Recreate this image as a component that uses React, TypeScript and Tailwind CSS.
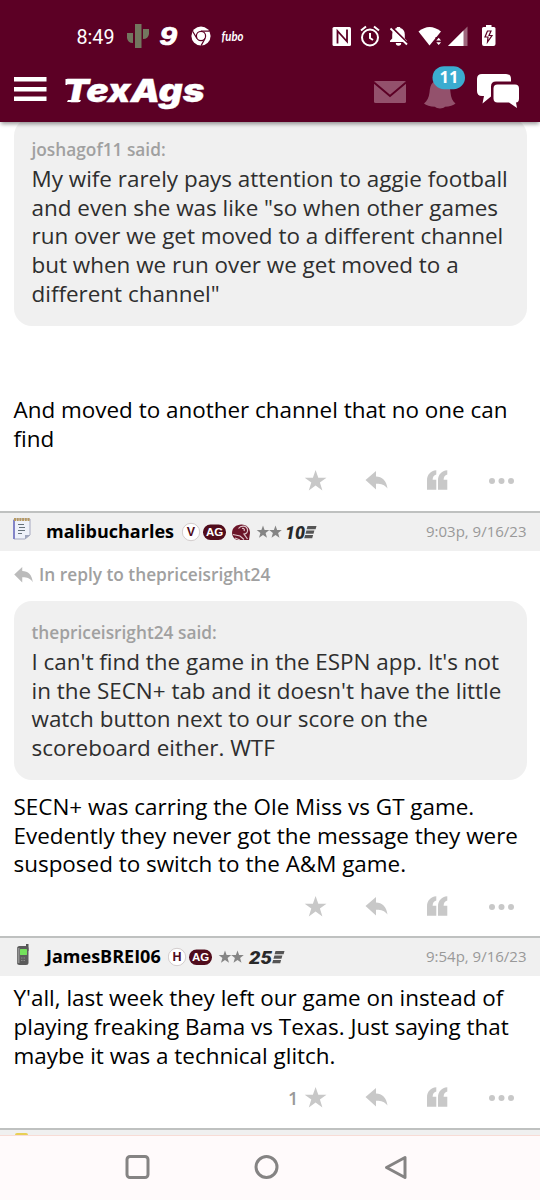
import type { ReactNode } from "react";

type BadgeKind = "V" | "H";

function StatusBar() {
  return (
    <svg className="block h-[66px] w-[540px]" viewBox="0 0 540 66" fill="#fff">
      <text x="76.5" y="43.5" fontFamily="Roboto" fontSize="20" textLength="38" lengthAdjust="spacingAndGlyphs">
        8:49
      </text>
      <g fill="#73765f">
        <rect x="135" y="24" width="6.5" height="24" />
        <path d="M127 33h6v10a6 6 0 0 1-6-5zM143 29h6v5a6 6 0 0 1-6 5z" />
      </g>
      <text x="159.5" y="44.5" fontFamily="Liberation Sans" fontSize="25" fontWeight="700" fontStyle="italic" stroke="#fff" strokeWidth=".7" textLength="17.500" lengthAdjust="spacingAndGlyphs">
        9
      </text>
      <circle cx="201" cy="36" r="9.6" />
      <g stroke="#5c0025" strokeWidth="1.2" fill="none">
        <circle cx="201" cy="36" r="4.6" />
        <path d="M201 31.2h8.5M196.9 38.4l-4.3-7.2M205.1 38.4l-4 7.2" />
      </g>
      <circle cx="201" cy="36" r="2.8" />
      <text x="221.5" y="41" fontFamily="Lato" fontSize="13" fontWeight="700" fontStyle="italic" textLength="22" lengthAdjust="spacingAndGlyphs">
        fubo
      </text>
      <rect x="332.5" y="27" width="18.5" height="19" rx="1.5" />
      <path d="M337.500 43.500V31l9.500 10.500V29.500" fill="none" stroke="#5c0025" strokeWidth="1.800" />
      <g fill="none" stroke="#fff" strokeWidth="2">
        <circle cx="370" cy="37.5" r="8" />
        <path d="M370 33v5l3 2M361 30.500l5-4M379 30.500l-5-4" />
      </g>
      <path d="M390 42v-1.300l2.200-2.200v-4c0-3.500 2-5.700 4.600-6.400v-1h3.400v1c2.800.7 4.600 3 4.600 6.400v4l2.200 2.200V42zM395.800 43h5.400a2.700 2.700 0 0 1-5.400 0z" />
      <path d="M391.500 27l16.500 16.500" stroke="#5c0025" strokeWidth="2" />
      <path d="M390.500 28.500l16.500 16" stroke="#fff" strokeWidth="1.800" />
      <path d="M418.500 31.500q11-9 22.500 0L429.500 45.500z" />
      <path d="M435.500 37h6.500v8h-6.500z" fill="#5c0025" />
      <path d="M436.300 40.500l2.400-2.700 2.400 2.700zM436.300 42.200l2.400 2.700 2.400-2.700z" />
      <path d="M448 46l19.500-19.500V46z" fillOpacity=".4" />
      <path d="M448 46l15.500-15.500V46z" />
      <path d="M483.500 27h2.500v-2h5.500v2h2.500q1.500 0 1.500 1.500v15.500q0 2-2 2H484q-2 0-2-2V28.500q0-1.500 1.500-1.500z" />
      <path d="M487.500 31l-2.500 6h3l-.5 5 4.500-6.500h-3l2-4.500z" fill="none" stroke="#5c0025" strokeWidth="1.200" />
    </svg>
  );
}

function Header() {
  return (
    <header className="relative z-10 h-[122px] bg-[#5c0025] shadow-[0_3px_4px_-1px_rgba(0,0,0,0.4)]">
      <StatusBar />
      <svg className="block h-[56px] w-[540px]" viewBox="0 66 540 56" fill="#fff">
        <path d="M14 77h32.500v4.500H14zM14 87h32.500v4.500H14zM14 96.500h32.500v4.500H14z" />
        <text x="63.500" y="102" fontFamily="Inter" fontSize="32" fontWeight="900" fontStyle="italic" stroke="#fff" strokeWidth=".3" textLength="141" lengthAdjust="spacingAndGlyphs">
          TexAgs
        </text>
        {/* bracket serifs on the T and the A */}
        <path d="M65.500 79h4l-2.500 6h-1.500zM68 100h13l-1 2H67z" />
        <g fill="#93516c">
          <rect x="374" y="81" width="32" height="22" rx="1.500" />
          <path d="M374 82.500l16 13.500 16-13.500" fill="none" stroke="#5c0025" strokeWidth="2" />
          <path d="M424 103.500c3-2.500 5-6 5.500-11 .5-9 4-12.500 10.500-12.500s10 4 10.500 12.500c.4 5 2 8.500 5 11-2 2-6 3-10.500 3.300-2 2.300-8 2.300-10 0-5-.3-9-1.300-11-3.300z" />
        </g>
        <rect x="432.500" y="66.200" width="32.500" height="23" rx="11.500" fill="#3bacd0" />
        <text x="449" y="83.300" textAnchor="middle" fontFamily="Open Sans" fontSize="16.500" fontWeight="700">
          11
        </text>
        <path d="M482 74h24q5 0 5 5v2.500h-15q-5 0-5 5V96.500l-8.500 7 1.500-7.500H482q-5 0-5-5V79q0-5 5-5z" />
        <path d="M497.500 84.500h17.500q4 0 4 4v10q0 4-3 4l1 5.500-8-5.500h-11.500q-4 0-4-4v-10q0-4 4-4z" />
      </svg>
    </header>
  );
}

function ReplyArrow({ className }: { className: string }) {
  return (
    <svg className={className} viewBox="0 0 22 19" fill="currentColor">
      <path d="M9.500 0v4.800c7 .2 11.500 4.200 12.500 13.200-3-4.500-7-5.800-12.500-5.700V18.500L0 9z" />
    </svg>
  );
}

function Actions({ count }: { count?: string }) {
  return (
    <div className="relative h-[22px] text-[#c8c8c8]">
      {count && (
        <span className="absolute left-[288px] top-0 text-[18px] font-semibold leading-[22px] text-[#999]">
          {count}
        </span>
      )}
      <svg className="block h-[22px] w-[540px]" viewBox="0 0 540 22" fill="currentColor">
        <path d="M315.600 0l2.700 7.700h8.200l-6.600 4.900 2.500 7.800-6.800-4.800-6.800 4.800 2.500-7.800-6.600-4.900h8.200z" />
        <path d="M376 1v5.500c6 .2 10.500 4 11.500 12-3-3.800-6.500-4.800-11.500-4.700v5.700L365.500 10z" />
        <path d="M436.300.2v4.200c-2.500.8-3.500 2.300-3.700 5.300h3.700v10H427v-9.500c0-5.500 3.500-9.500 9.300-10zM447.300.2v4.200c-2.500.8-3.500 2.300-3.700 5.300h3.700v10H438v-9.500c0-5.500 3.500-9.500 9.300-10z" />
        <circle cx="492" cy="11" r="3" />
        <circle cx="501.500" cy="11" r="3" />
        <circle cx="511" cy="11" r="3" />
      </svg>
    </div>
  );
}

function Lines({ lines, className }: { lines: string[]; className: string }) {
  return (
    <div className={`whitespace-nowrap text-[22.440px] leading-[28.700px] ${className}`}>
      {lines.map((line) => (
        <p key={line}>{line}</p>
      ))}
    </div>
  );
}

function Quote({ author, lines, className }: { author: string; lines: string[]; className: string }) {
  return (
    <div className={`mx-[13.500px] rounded-[18px] bg-[#f0f0f0] px-[18px] ${className}`}>
      <div className="h-[26px] text-[17.300px] font-semibold leading-[26px] text-[#a0a0a0]">{author} said:</div>
      <Lines lines={lines} className="mt-[2px] text-[#2e2e2e]" />
    </div>
  );
}

function Badges({ kind, years, helmet }: { kind: BadgeKind; years: string; helmet?: boolean }) {
  const end = helmet ? 74 : 50;
  return (
    <svg className="block h-[24px] w-[140px]" viewBox="0 0 140 24">
      <circle cx="9" cy="12" r="8.700" fill="#fff" stroke="#d2cccc" />
      <text x="9" y="16.300" textAnchor="middle" fontFamily="Liberation Sans" fontSize="12.500" fontWeight="700" fill="#500c1c">
        {kind}
      </text>
      <rect x="21" y="4.500" width="23" height="15.500" rx="7.500" fill="#500c1c" />
      <text x="32.500" y="16.400" textAnchor="middle" fontFamily="Liberation Sans" fontSize="11.500" fontWeight="700" fill="#fff">
        AG
      </text>
      {helmet && (
        <g>
          <path d="M50 13c0-5 4-8.500 9.500-8.500 5 0 8.500 3.500 8.500 8.500l-1 7H55c-3-1-5-4-5-7z" fill="#6b1529" />
          <path d="M56.500 8.500c2-3 8-3.500 9 1 .5 2.500-1 4.500-3.500 4.500l3.500 5M51 14.500l7 1.500 4 3.500M53 18l5 2M60 8.500c2-.5 3 1 2 2.500" fill="none" stroke="#dfc6cb" strokeWidth="1.200" />
        </g>
      )}
      <g transform={`translate(${end} 0)`}>
        <path
          fill="#858585"
          d="M7 5.500l1.600 4.500H13.300l-3.700 2.900 1.400 4.900L7 15l-4 2.800L4.400 12.900.700 10h4.700zM19.500 5.500l1.600 4.500h4.700l-3.700 2.900 1.400 4.900-4-2.800-4 2.800 1.400-4.900-3.700-2.900h4.700z"
        />
        <text x={helmet ? "29" : "31"} y="18.500" fontFamily="Roboto" fontSize="18.500" fontWeight="900" fontStyle="italic" fill="#292929" textLength={helmet ? "20" : "23"} lengthAdjust="spacingAndGlyphs">
          {years}
        </text>
        <path
          transform={helmet ? "translate(-5.500 0)" : "translate(.500 0)"}
          fill="#555"
          d="M57 6h9l-.9 3.200h-9zM55.900 10.500h8l-.9 3.200h-8zM54.600 15h8l-.9 3.200h-8z"
        />
      </g>
    </svg>
  );
}

function PostHeader({ icon, name, time, badges, nameClass }: { icon: ReactNode; name: string; time: string; badges: ReactNode; nameClass: string }) {
  return (
    <div className="flex h-[40px] items-center border-t-2 border-[#bfc1c0] bg-[#f0f0f0] pr-[13.500px]">
      <div className="w-[46px] shrink-0">{icon}</div>
      <span className={`-mt-px shrink-0 whitespace-nowrap text-[18px] font-bold text-black ${nameClass}`}>{name}</span>
      {badges}
      <span className="-mt-px ml-auto whitespace-nowrap text-[15px] text-[#999]">{time}</span>
    </div>
  );
}

function NotepadIcon() {
  return (
    <svg className="-mt-1.5 ml-[12px] block h-[24px] w-[20px]" viewBox="0 0 20 24">
      <path d="M2 2h16v16l-5 4H2z" fill="#eef1fa" stroke="#a5a8c0" />
      <path d="M2 3v19" stroke="#8384c8" strokeWidth="2" />
      <path d="M2 2.500h16" stroke="#b79a62" strokeWidth="3" strokeDasharray="2 .700" />
      <path d="M6 7.500h6M7 10.500h6M6 13.500h7M6 16.500h4" stroke="#65717a" strokeWidth="1.200" />
      <path d="M18 18l-5 4v-4z" fill="#9fa6bd" />
    </svg>
  );
}

function PhoneIcon() {
  return (
    <svg className="-mt-1 ml-[15px] block h-[24px] w-[16px]" viewBox="0 0 16 24">
      <rect x="11" y="1" width="2.500" height="7" fill="#555" />
      <rect x="2" y="3" width="11.500" height="19" rx="2.500" fill="#5b5b5b" />
      <path d="M3.500 5v15" stroke="#929292" strokeWidth="2" />
      <rect x="5" y="6" width="7" height="6" rx=".500" fill="#73e05b" />
      <path d="M6 15h5M6 17.500h5" stroke="#8a8a8a" strokeDasharray="1.500 1" />
    </svg>
  );
}

function NavBar() {
  return (
    <div className="h-[65px] border-t border-[#f8dcd6] bg-[#fffafb]">
      <svg className="block h-[64px] w-[540px]" viewBox="0 1136 540 64" fill="none" stroke="#858383" strokeWidth="3">
        <rect x="127" y="1156.500" width="21" height="21" rx="3" />
        <circle cx="266.500" cy="1167" r="10.500" />
        <path d="M405 1157.500v20l-18.500-10z" strokeLinejoin="round" />
      </svg>
    </div>
  );
}

export default function App() {
  return (
    <div className="flex h-[1200px] w-[540px] flex-col overflow-hidden bg-white font-['Open_Sans',sans-serif]">
      <Header />
      <Quote
        className="-mt-[4px] h-[208px] pt-[19px]"
        author="joshagof11"
        lines={[
          "My wife rarely pays attention to aggie football",
          'and even she was like "so when other games',
          "run over we get moved to a different channel",
          "but when we run over we get moved to a",
          'different channel"',
        ]}
      />
      <Lines className="mt-[70px] px-[13.500px] text-black" lines={["And moved to another channel that no one can", "find"]} />
      <div className="mt-[17px] h-[41px]">
        <Actions />
      </div>
      <PostHeader
        icon={<NotepadIcon />}
        name="malibucharles"
        nameClass="w-[136px]"
        time="9:03p, 9/16/23"
        badges={<Badges kind="V" years="10" helmet />}
      />
      <div className="flex h-[48px] items-center gap-[6px] pl-[14px] text-[17.300px] font-semibold text-[#a0a0a0]">
        <ReplyArrow className="h-[16px] w-[19px] text-[#bbb]" />
        In reply to thepriceisright24
      </div>
      <Quote
        className="mt-[2px] h-[179px] pt-[19px]"
        author="thepriceisright24"
        lines={[
          "I can't find the game in the ESPN app. It's not",
          "in the SECN+ tab and it doesn't have the little",
          "watch button next to our score on the",
          "scoreboard either. WTF",
        ]}
      />
      <Lines
        className="mt-[13px] px-[13.500px] text-black"
        lines={[
          "SECN+ was carring the Ole Miss vs GT game.",
          "Evedently they never got the message they were",
          "susposed to switch to the A&M game.",
        ]}
      />
      <div className="mt-[17px] h-[40px]">
        <Actions />
      </div>
      <PostHeader
        icon={<PhoneIcon />}
        name="JamesBREI06"
        nameClass="w-[122px]"
        time="9:54p, 9/16/23"
        badges={<Badges kind="H" years="25" />}
      />
      <Lines
        className="mt-[8.500px] px-[13.500px] text-black"
        lines={[
          "Y'all, last week they left our game on instead of",
          "playing freaking Bama vs Texas. Just saying that",
          "maybe it was a technical glitch.",
        ]}
      />
      <div className="mt-[16.500px] h-[41px]">
        <Actions count="1" />
      </div>
      <div className="h-[7px] shrink-0 border-t-2 border-[#bfc1c0] bg-[#f0f0f0] pl-[15px] pt-[3px]">
        <div className="h-[2px] w-[13px] rounded-t-full bg-[#e8cf55]" />
      </div>
      <NavBar />
    </div>
  );
}
